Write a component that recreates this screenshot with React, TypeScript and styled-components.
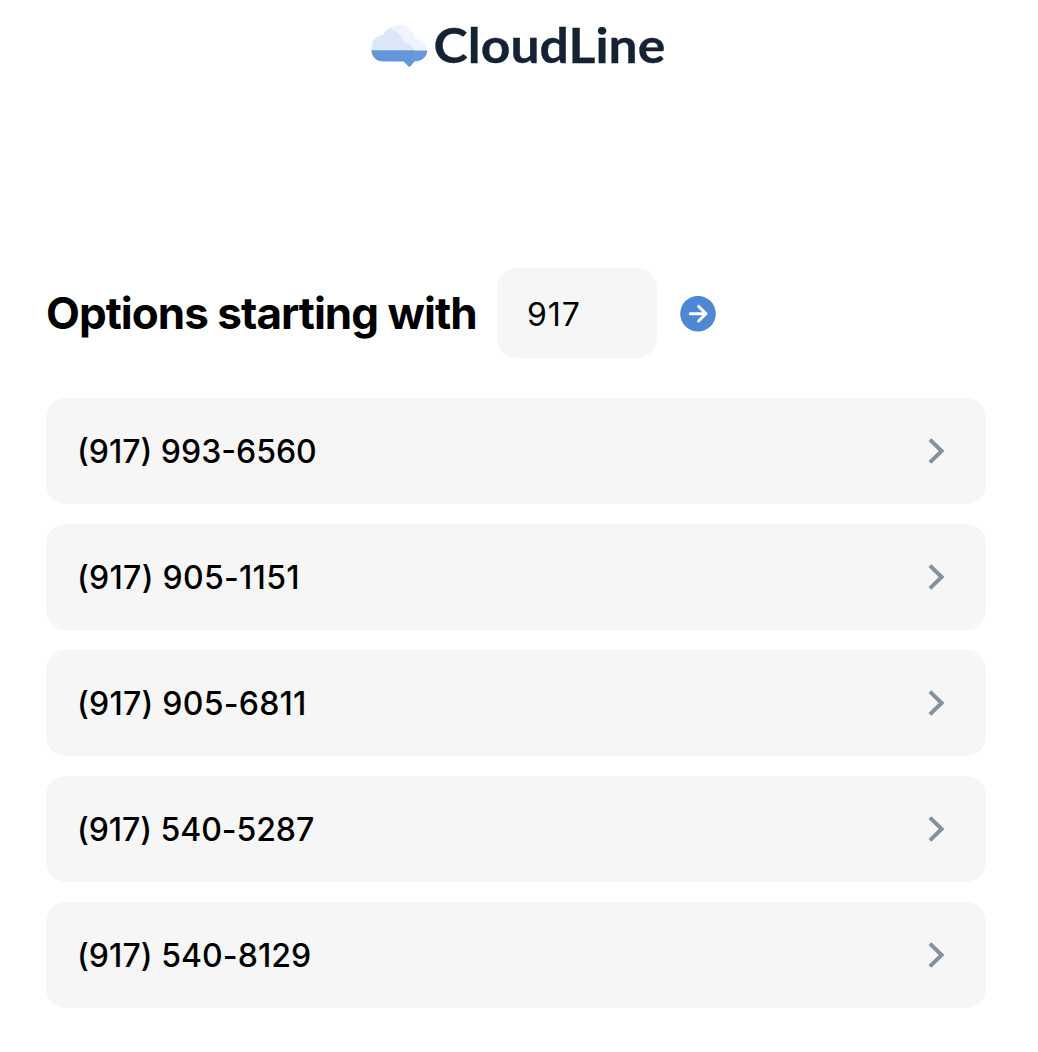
import React, { useState } from "react";
import styled, { createGlobalStyle } from "styled-components";

const GlobalStyle = createGlobalStyle`
  *, *::before, *::after { box-sizing: border-box; }
  body {
    margin: 0;
    background: #ffffff;
    color: #000000;
    font-family: Inter, "Liberation Sans", sans-serif;
  }
`;

const Page = styled.div`
  width: 1038px;
  min-height: 1052px;
  padding: 14px 52px 44px 46px;
`;

const Header = styled.header`
  display: flex;
  height: 64px;
  padding-left: 325px;
`;

const Search = styled.form`
  display: flex;
  align-items: center;
  height: 90px;
  margin-top: 190px;
`;

const Heading = styled.h1`
  margin: 0;
  width: 451px;
  font-size: 44px;
  font-weight: 700;
  line-height: 54px;
  letter-spacing: -0.97px;
  white-space: nowrap;
`;

const PrefixInput = styled.input`
  width: 160px;
  height: 90px;
  padding: 2px 30px 0;
  border: 0;
  border-radius: 20px;
  outline: none;
  background: #f6f6f6;
  color: #000000;
  font: 400 32px Inter, "Liberation Sans", sans-serif;
  font-kerning: none;
  letter-spacing: 1px;
`;

const SubmitButton = styled.button`
  display: flex;
  margin: 1px 0 0 23px;
  padding: 0;
  border: 0;
  background: none;
  cursor: pointer;
`;

const OptionList = styled.div`
  display: flex;
  flex-direction: column;
  gap: 20px;
  margin-top: 40px;
`;

const Option = styled.button`
  display: flex;
  align-items: center;
  justify-content: space-between;
  width: 940px;
  height: 106px;
  padding: 0 41px 0 31px;
  border: 0;
  border-radius: 20px;
  background: #f6f6f6;
  cursor: pointer;
`;

const PhoneNumber = styled.span<{ $tracking: number }>`
  padding-top: 2px;
  color: #000000;
  font: 500 32px/40px Inter, "Liberation Sans", sans-serif;
  font-kerning: none;
  letter-spacing: ${(p) => p.$tracking}px;
`;

const numbers = [
  { value: "(917) 993-6560", tracking: 0 },
  { value: "(917) 905-1151", tracking: 0.28 },
  { value: "(917) 905-6811", tracking: 0.25 },
  { value: "(917) 540-5287", tracking: -0.06 },
  { value: "(917) 540-8129", tracking: 0.06 },
];

function Logo() {
  return (
    <svg width="300" height="64" viewBox="0 -10 300 64" role="img" aria-label="CloudLine">
      <defs>
        <clipPath id="cloud">
          <circle cx="27.5" cy="17.2" r="16.5" />
          <circle cx="13.6" cy="23.6" r="13" />
          <circle cx="45.3" cy="26.2" r="10.9" />
          <rect x="0.6" y="15" width="55.6" height="22.2" rx="11" />
        </clipPath>
        <clipPath id="water">
          <rect y="26.4" width="60" height="18" />
        </clipPath>
      </defs>
      <g clipPath="url(#cloud)">
        <rect width="60" height="44" fill="#edf4fd" />
        <g fill="#dbe7f9">
          <circle cx="14.5" cy="23.5" r="19" />
          <circle cx="32.3" cy="30" r="11.2" />
        </g>
        <g clipPath="url(#water)">
          <rect width="60" height="44" fill="#6999dd" />
          <path d="M0 20H43V30Q42.5 34 39 38H0Z" fill="#6496da" />
        </g>
      </g>
      <path d="M32 37H44L39.4 42.2Q38.4 43.2 37.4 42.2Z" fill="#6496da" />
      <text
        x="62.6"
        y="39"
        fill="#152234"
        fontFamily="Lato, sans-serif"
        fontSize="47.5"
        fontWeight="700"
        textLength="231.8"
        lengthAdjust="spacingAndGlyphs"
        stroke="#152234"
        strokeWidth="0.3"
      >
        CloudLine
      </text>
    </svg>
  );
}

export default function App() {
  const [prefix, setPrefix] = useState("917");
  return (
    <>
      <GlobalStyle />
      <Page>
        <Header>
          <Logo />
        </Header>
        <main>
          <Search onSubmit={(e) => e.preventDefault()}>
            <Heading>Options starting with</Heading>
            <PrefixInput
              aria-label="Area code"
              value={prefix}
              onChange={(e) => setPrefix(e.target.value)}
            />
            <SubmitButton aria-label="Search">
              <svg width="36" height="36" viewBox="0 0 36 36" fill="none">
                <circle cx="18" cy="17.7" r="17.8" fill="#4d87d6" />
                <path
                  d="M10.3 17.7H26M18.6 10.4L26 17.7L18.6 25"
                  stroke="#fff"
                  strokeWidth="2.9"
                  strokeLinecap="round"
                  strokeLinejoin="round"
                />
              </svg>
            </SubmitButton>
          </Search>
          <OptionList>
            {numbers.map(({ value, tracking }) => (
              <Option key={value} type="button">
                <PhoneNumber $tracking={tracking}>{value}</PhoneNumber>
                <svg width="17" height="26" viewBox="0 0 17 26" fill="none">
                  <path d="M1.9 1.7L13.7 13L1.9 24.3" stroke="#8191a0" strokeWidth="3.9" />
                </svg>
              </Option>
            ))}
          </OptionList>
        </main>
      </Page>
    </>
  );
}
